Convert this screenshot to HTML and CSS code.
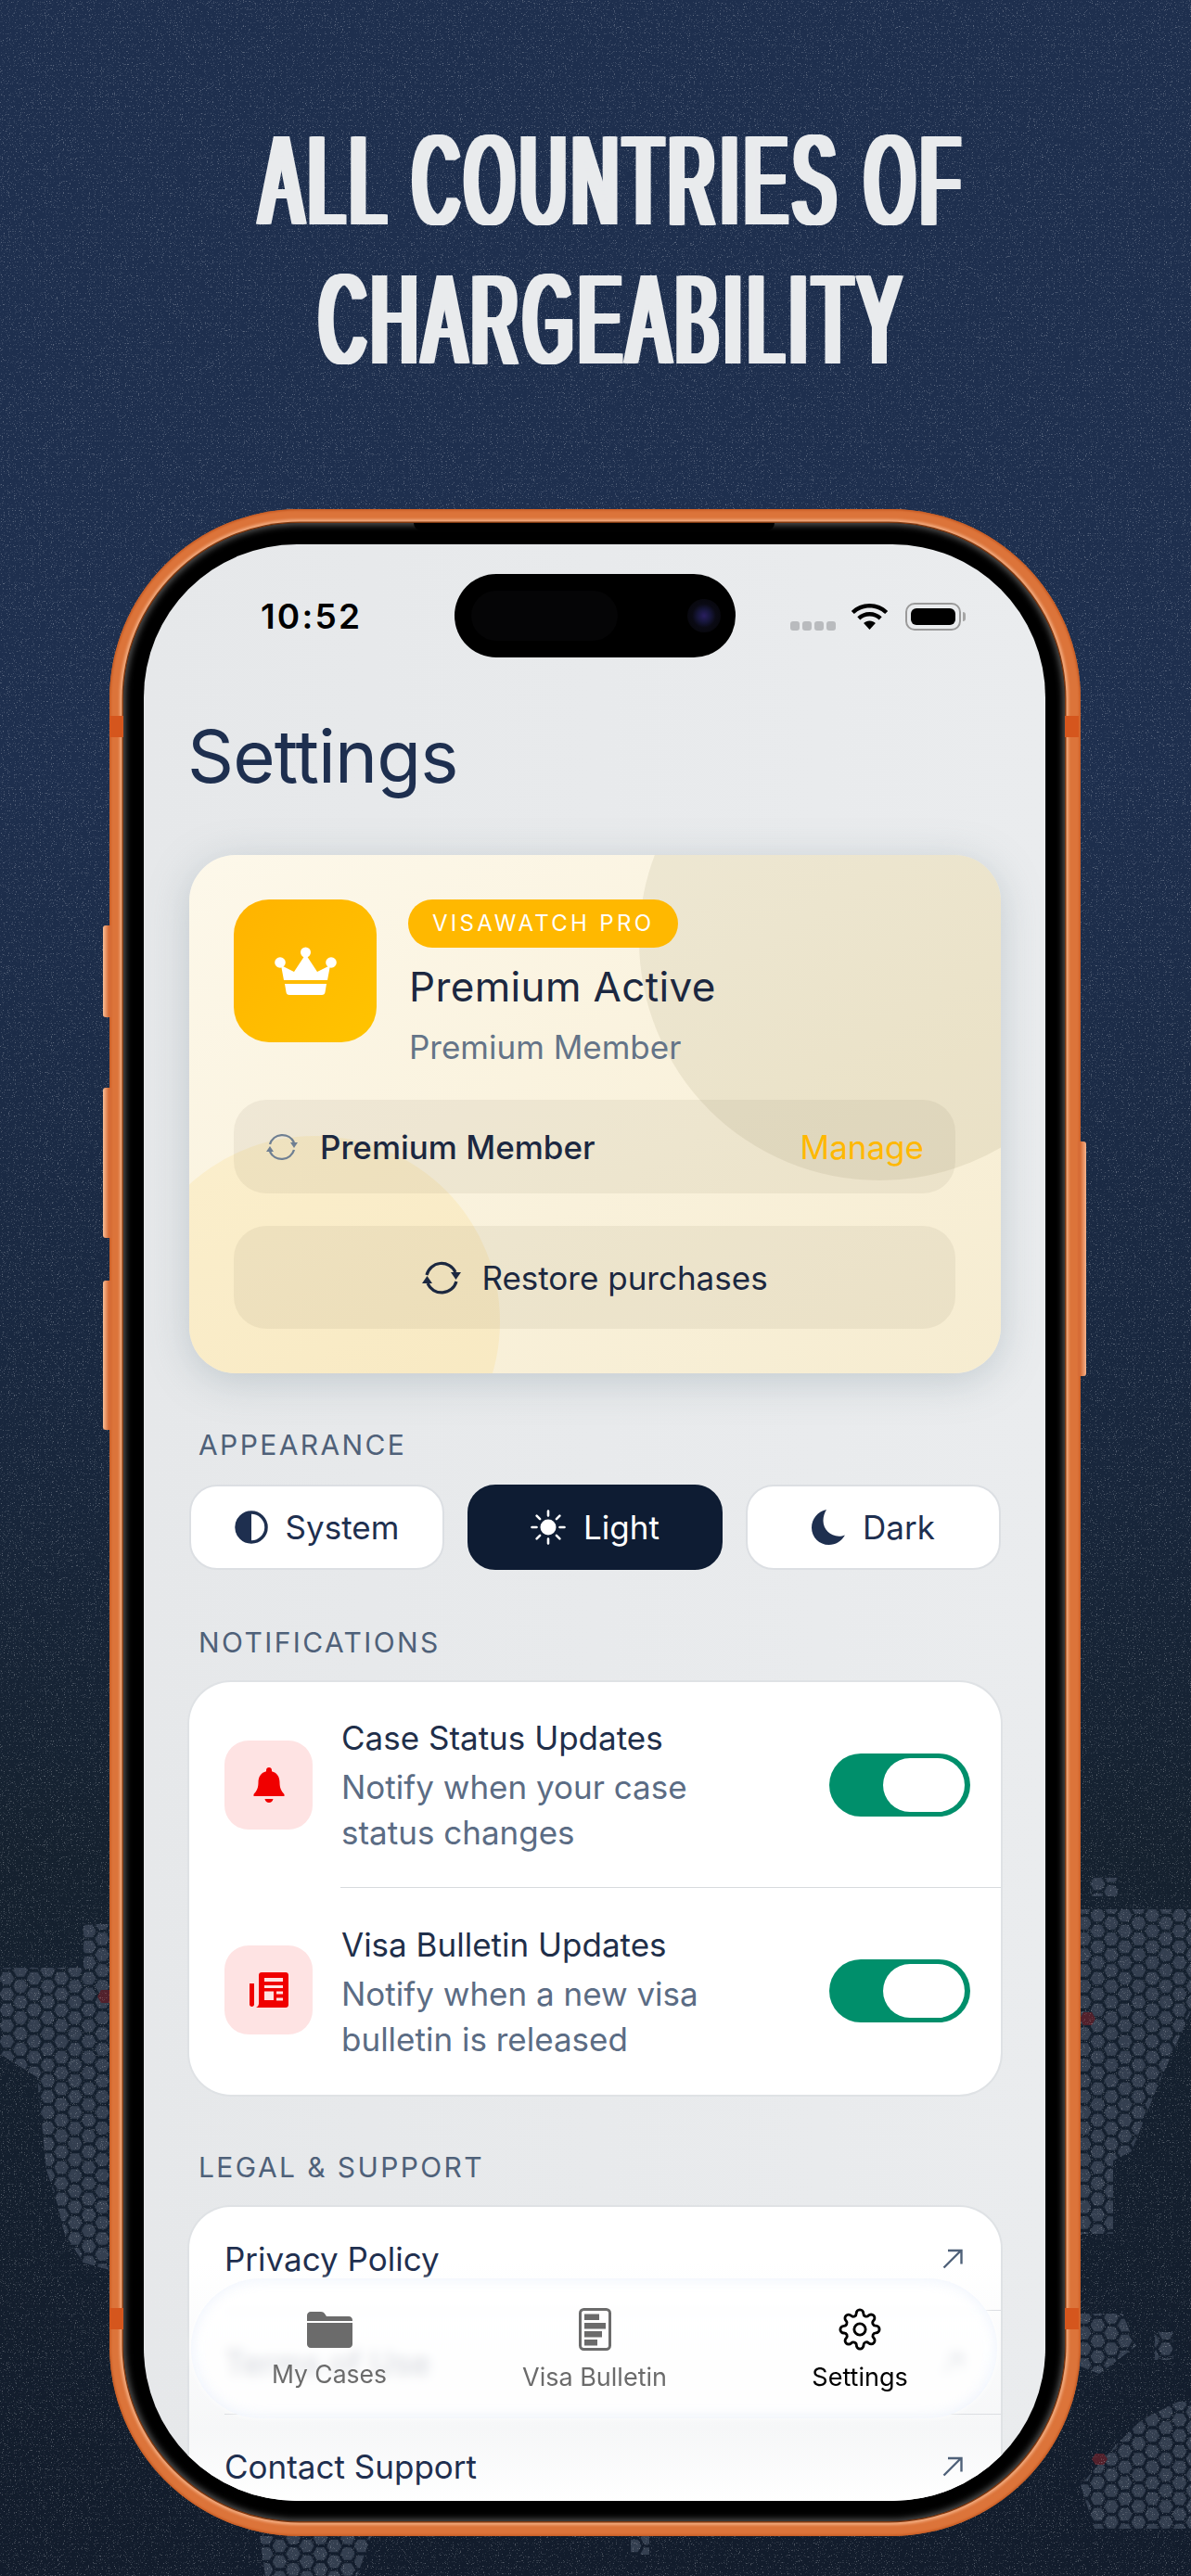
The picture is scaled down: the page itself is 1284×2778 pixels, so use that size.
FILE: index.html
```html
<!DOCTYPE html>
<html lang="en">
<head>
<meta charset="utf-8">
<title>VisaWatch</title>
<link rel="stylesheet" href="styles.css">
</head>
<body>
<div class="stage">
  <svg class="backdrop" viewBox="0 0 1284 2778" aria-hidden="true">
    <defs>
      <pattern id="hex" width="29.4" height="17" patternUnits="userSpaceOnUse">
        <polygon points="15.2,8.5 11.3,15.25 3.5,15.25 -.4,8.5 3.5,1.75 11.3,1.75"/>
        <polygon points="29.9,0 26,6.75 18.2,6.75 14.3,0 18.2,-6.75 26,-6.75"/>
        <polygon points="29.9,17 26,23.75 18.2,23.75 14.3,17 18.2,10.25 26,10.25"/>
      </pattern>
      <filter id="grain" x="0" y="0" width="100%" height="100%">
        <feTurbulence type="fractalNoise" baseFrequency="0.85" numOctaves="2" seed="7"/>
        <feColorMatrix type="matrix" values="0 0 0 0 1  0 0 0 0 1  0 0 0 0 1  0 0 0 5 -3.05"/>
      </filter>
    </defs>
    <g class="map" fill="url(#hex)">
      <polygon points="0,2122 90,2122 90,2075 125,2075 125,2450 90,2440 70,2410 60,2370 50,2340 45,2290 40,2240 0,2215"/>
      <polygon points="1160,2059 1284,2059 1284,2169 1247,2252 1220,2320 1200,2330 1200,2409 1160,2409"/>
      <polygon points="1175,2025 1205,2025 1205,2045 1175,2045"/>
      <polygon points="1160,2495 1210,2495 1225,2530 1185,2560 1160,2550"/>
      <polygon points="1245,2515 1265,2515 1265,2545 1245,2545"/>
      <polygon points="1270,2590 1284,2590 1284,2727 1180,2727 1165,2680 1200,2640 1230,2610"/>
      <polygon points="280,2735 400,2735 385,2778 286,2778"/>
      <polygon points="680,2735 700,2735 700,2755 680,2755"/>
    </g>
    <g class="map-red">
      <polygon points="122,2153 118,2160 109,2160 105,2153 109,2146 118,2146"/>
      <polygon points="1181,2177 1177,2184 1168,2184 1164,2177 1168,2170 1177,2170"/>
      <polygon points="1194,2652 1190,2658 1181,2658 1177,2652 1181,2646 1190,2646"/>
    </g>
    <rect class="grain" width="1284" height="2778" filter="url(#grain)"/>
  </svg>

  <h1 class="headline">
    <span class="headline-line">ALL COUNTRIES OF</span>
    <span class="headline-line">CHARGEABILITY</span>
  </h1>

  <div class="phone">
    <i class="side side-l side-1"></i>
    <i class="side side-l side-2"></i>
    <i class="side side-l side-3"></i>
    <i class="side side-r"></i>
    <i class="band band-lt"></i>
    <i class="band band-lb"></i>
    <i class="band band-rt"></i>
    <i class="band band-rb"></i>
    <div class="bezel">
      <i class="notch"></i>
      <div class="screen">
        <div class="status">
          <span class="time">10:52</span>
          <div class="status-right">
            <span class="signal"><i></i><i></i><i></i><i></i></span>
            <svg class="wifi" viewBox="0 0 41 30"><path d="M20.5 5.5c6.6 0 12.3 2.5 16.7 6.6l3-3.2C35 4 28.200 1 20.500 1S6 4 .8 8.900l3 3.200C8.200 8 13.900 5.500 20.500 5.500z"/><path d="M20.500 14.500c4 0 7.500 1.500 10.200 3.900l3-3.200c-3.500-3.200-8.100-5.200-13.200-5.200s-9.700 2-13.200 5.200l3 3.200c2.700-2.400 6.200-3.900 10.200-3.900z"/><path d="M20.500 19.500c-2.500 0-4.700.9-6.400 2.500l6.400 7 6.400-7c-1.700-1.600-3.900-2.500-6.400-2.500z"/></svg>
            <span class="battery"><i></i></span>
            <i class="battery-tip"></i>
          </div>
        </div>
        <div class="island"><i class="island-sensor"></i><i class="island-cam"></i></div>

        <h2 class="page-title">Settings</h2>

        <section class="premium">
          <i class="blob blob-a"></i>
          <i class="blob blob-b"></i>
          <div class="premium-head">
            <div class="crown-box">
              <svg class="crown" viewBox="0 0 67 52" fill="#fff"><circle cx="33.500" cy="6" r="5.500"/><circle cx="6" cy="17" r="5.800"/><circle cx="61" cy="17" r="5.800"/><path d="M7 20l14 7L33.500 8 46 27l14-7-3 16H10z"/><path d="M11 40h45l-1.500 9c-.3 2-1.500 3-3.500 3H16c-2 0-3.200-1-3.500-3z"/></svg>
            </div>
            <div class="premium-info">
              <span class="badge">VISAWATCH PRO</span>
              <div class="premium-title">Premium Active</div>
              <div class="premium-sub">Premium Member</div>
            </div>
          </div>
          <div class="member-row">
            <svg class="sync sync-sm" viewBox="0 0 36 36" fill="none" stroke="#6f7f92" stroke-width="2.400"><path d="M5 15A14 14 0 0 1 31 13"/><path d="M31 21A14 14 0 0 1 5 23"/><path d="M27 13h8l-4 6z" fill="#6f7f92" stroke="none"/><path d="M1 23h8l-4-6z" fill="#6f7f92" stroke="none"/></svg>
            <span class="member-label">Premium Member</span>
            <span class="manage">Manage</span>
          </div>
          <div class="restore">
            <svg class="sync sync-lg" viewBox="0 0 44 38" fill="none" stroke="#1c2840" stroke-width="3.200"><path d="M6 16A16.500 16.500 0 0 1 37 13"/><path d="M38 23A16.500 16.500 0 0 1 7 25"/><path d="M32 13h11l-5.500 8z" fill="#1c2840" stroke="none"/><path d="M1 25h11L6.500 17z" fill="#1c2840" stroke="none"/></svg>
            <span>Restore purchases</span>
          </div>
        </section>

        <div class="section-label label-appearance">APPEARANCE</div>
        <div class="segments">
          <div class="segment">
            <svg class="seg-icon" viewBox="0 0 36 36"><circle cx="18" cy="18" r="16" fill="none" stroke="#1e2f4f" stroke-width="3.500"/><path d="M18 2a16 16 0 0 0 0 32z" fill="#1e2f4f"/></svg>
            <span>System</span>
          </div>
          <div class="segment segment-active">
            <svg class="seg-icon seg-sun" viewBox="0 0 38 38" stroke="#fff" stroke-width="2.600" stroke-linecap="round"><circle cx="19" cy="19" r="8.500" fill="#fff" stroke="none"/><path d="M19 1.500v5M19 31.500v5M1.500 19h5M31.500 19h5M6.600 6.600l3.500 3.500M27.900 27.900l3.500 3.500M6.600 31.400l3.500-3.500M27.900 10.100l3.500-3.500"/></svg>
            <span>Light</span>
          </div>
          <div class="segment">
            <svg class="seg-icon seg-moon" viewBox="0 0 36 38"><path d="M16 0C6.500 2 0 10 0 19.500 0 30 8.500 38 18.500 38c7.500 0 13.500-4 17.500-10.500-2 1-4.500 1.200-6.500 1.200C20 28.700 12.500 21 12.500 12 12.500 7.500 13.800 3.500 16 0z" fill="#1e2f4f"/></svg>
            <span>Dark</span>
          </div>
        </div>

        <div class="section-label label-notifications">NOTIFICATIONS</div>
        <section class="card notif-card">
          <div class="notif-row notif-row-first">
            <div class="notif-icon">
              <svg class="bell" viewBox="0 0 34 38" fill="#f00000"><path d="M17 0c1.700 0 3 1.300 3 3v1.200c5.500 1.300 8.500 6 8.500 11.800 0 6 1.500 9 5 13v2H.500v-2c3.500-4 5-7 5-13 0-5.800 3-10.500 8.500-11.800V3c0-1.700 1.300-3 3-3z"/><path d="M12.500 34h9c-.5 2.500-2.300 4-4.500 4s-4-1.500-4.500-4z"/></svg>
            </div>
            <div class="notif-body">
              <div class="notif-text">
                <div class="notif-title">Case Status Updates</div>
                <div class="notif-sub">Notify when your case<br>status changes</div>
              </div>
              <div class="toggle"><i class="knob"></i></div>
            </div>
          </div>
          <div class="notif-row">
            <div class="notif-icon">
              <svg class="news" viewBox="0 0 42 38" fill="#f00000"><path d="M10 3c0-1.700 1.300-3 3-3h26c1.700 0 3 1.300 3 3v32c0 1.700-1.300 3-3 3H7c1.900-.8 3-2.400 3-4.500zM16 6v4h20V6zm0 8v3h20v-3zm0 6.500V30h10v-9.500zm13 0v3h7v-3zm0 7v3h7v-3z"/><path d="M0 12h5v22.500c0 1.500-1.100 2.500-2.500 2.500S0 36 0 34.500z"/></svg>
            </div>
            <div class="notif-body notif-body-last">
              <div class="notif-text">
                <div class="notif-title">Visa Bulletin Updates</div>
                <div class="notif-sub">Notify when a new visa<br>bulletin is released</div>
              </div>
              <div class="toggle"><i class="knob"></i></div>
            </div>
          </div>
        </section>

        <div class="section-label label-legal">LEGAL &amp; SUPPORT</div>
        <section class="card legal-card">
          <div class="legal-row"><span>Privacy Policy</span>
            <svg class="arrow" viewBox="0 0 22 22" fill="none" stroke="#4f6179" stroke-width="2.400"><path d="M1.500 20.500L20 2M6 2h14.500v14.500"/></svg></div>
          <div class="legal-row"><span>Terms of Use</span>
            <svg class="arrow" viewBox="0 0 22 22" fill="none" stroke="#4f6179" stroke-width="2.400"><path d="M1.500 20.500L20 2M6 2h14.500v14.500"/></svg></div>
          <div class="legal-row"><span>Contact Support</span>
            <svg class="arrow" viewBox="0 0 22 22" fill="none" stroke="#4f6179" stroke-width="2.400"><path d="M1.500 20.500L20 2M6 2h14.500v14.500"/></svg></div>
        </section>

        <nav class="tabbar">
          <div class="tab tab-cases">
            <div class="tab-icon">
              <svg class="folder" viewBox="0 0 49 39"><path d="M4 0h11c2 0 3 .8 4 2l2 3h24c2.300 0 4 1.700 4 4v1H0V4c0-2.300 1.700-4 4-4z" fill="#6b6b6b"/><path d="M0 12h49v23c0 2.300-1.700 4-4 4H4c-2.300 0-4-1.700-4-4z" fill="#6b6b6b"/></svg>
            </div>
            <span>My Cases</span>
          </div>
          <div class="tab tab-bulletin">
            <div class="tab-icon">
              <svg class="bulletin" viewBox="0 0 35 46"><rect x="1.500" y="1.500" width="32" height="43" rx="4" fill="none" stroke="#6b6b6b" stroke-width="3"/><rect x="6" y="6.500" width="16" height="6.500" fill="#6b6b6b"/><rect x="6" y="16" width="23" height="6.500" fill="#6b6b6b"/><rect x="6" y="25" width="19" height="6.500" fill="#6b6b6b"/><rect x="6" y="34" width="14" height="6.500" fill="#6b6b6b"/></svg>
            </div>
            <span>Visa Bulletin</span>
          </div>
          <div class="tab tab-settings">
            <div class="tab-icon">
              <svg class="gear" viewBox="0 0 24 24" fill="none" stroke="#000" stroke-width="1.500" stroke-linejoin="round"><circle cx="12" cy="12" r="3.200"/><path d="M19.400 15a1.650 1.650 0 0 0 .33 1.820l.06.06a2 2 0 0 1 0 2.830 2 2 0 0 1-2.830 0l-.06-.06a1.650 1.650 0 0 0-1.820-.33 1.650 1.650 0 0 0-1 1.510V21a2 2 0 0 1-2 2 2 2 0 0 1-2-2v-.09A1.650 1.650 0 0 0 9 19.400a1.650 1.650 0 0 0-1.820.33l-.06.06a2 2 0 0 1-2.830 0 2 2 0 0 1 0-2.830l.06-.06a1.650 1.650 0 0 0 .33-1.820 1.650 1.650 0 0 0-1.510-1H3a2 2 0 0 1-2-2 2 2 0 0 1 2-2h.09A1.650 1.650 0 0 0 4.600 9a1.650 1.650 0 0 0-.33-1.820l-.06-.06a2 2 0 0 1 0-2.830 2 2 0 0 1 2.830 0l.06.06a1.650 1.650 0 0 0 1.820.33H9a1.650 1.650 0 0 0 1-1.510V3a2 2 0 0 1 2-2 2 2 0 0 1 2 2v.09a1.650 1.650 0 0 0 1 1.510 1.650 1.650 0 0 0 1.820-.33l.06-.06a2 2 0 0 1 2.830 0 2 2 0 0 1 0 2.830l-.06.06a1.650 1.650 0 0 0-.33 1.820V9a1.650 1.650 0 0 0 1.510 1H21a2 2 0 0 1 2 2 2 2 0 0 1-2 2h-.09a1.650 1.650 0 0 0-1.510 1z"/></svg>
            </div>
            <span>Settings</span>
          </div>
        </nav>
      </div>
    </div>
  </div>
</div>
</body>
</html>
```

FILE: styles.css
```css
* { box-sizing: border-box; }
html, body { margin: 0; padding: 0; }
body { width: 1284px; height: 2778px; overflow: hidden; font-family: Inter, "Liberation Sans", sans-serif; }
i { display: block; }

.stage {
  position: relative;
  width: 1284px;
  height: 2778px;
  overflow: hidden;
  background: linear-gradient(180deg, #1e2f4e 0%, #1e2f4e 30%, #192840 52%, #15212f 72%, #121c2c 100%);
}
.backdrop { position: absolute; left: 0; top: 0; width: 1284px; height: 2778px; }
.map polygon { stroke: none; }
#hex polygon { fill: #343f50; }
.map-red { fill: #51202b; }
.grain { opacity: .28; }

.headline {
  position: relative;
  display: flex;
  flex-direction: column;
  align-items: center;
  margin: 0;
  padding: 120px 0 0 38px;
  height: 549px;
  font-family: "Liberation Sans", sans-serif;
  font-weight: 400;
  font-size: 137px;
  line-height: 149.5px;
  letter-spacing: 14px;
  color: #e9ebed;
  text-shadow: 2px 0 #e9ebed, -2px 0 #e9ebed, 4px 0 #e9ebed, -4px 0 #e9ebed, 6px 0 #e9ebed, -6px 0 #e9ebed, 8px 0 #e9ebed, -8px 0 #e9ebed, 10px 0 #e9ebed, -10px 0 #e9ebed;
}
.headline-line { display: block; flex: none; width: max-content; white-space: nowrap; transform: scaleX(.495); }

/* device */
.phone {
  position: relative;
  width: 1047px;
  height: 2186px;
  margin-left: 118px;
  padding: 15px 17px 16px 15px;
  border-radius: 205px;
  background: #dc743a;
  box-shadow: inset 0 0 2px 1.500px #c75c24;
}
.side { position: absolute; width: 9px; background: linear-gradient(90deg, #fbbe96, #d66c36 70%); border-radius: 3px 0 0 3px; }
.side-l { left: -7px; }
.side-1 { top: 449px; height: 99px; }
.side-2 { top: 624px; height: 162px; }
.side-3 { top: 832px; height: 161px; }
.side-r { right: -6px; top: 682px; height: 253px; border-radius: 0 3px 3px 0; background: linear-gradient(270deg, #f7b28a, #d66c36 70%); }
.band { position: absolute; width: 15px; height: 23px; background: #d5561d; z-index: 2; }
.band-lt { left: 0; top: 223px; }
.band-lb { left: 0; top: 1940px; }
.band-rt { right: 2px; top: 223px; }
.band-rb { right: 2px; top: 1940px; }

.bezel {
  position: relative;
  width: 1015px;
  height: 2155px;
  padding: 23px 21px 22px 22px;
  border-radius: 190px;
  background: #000;
  box-shadow: 0 0 0 1.500px #80380f, 0 0 3px 4px rgba(255, 205, 170, .6), inset 0 0 7px 2px #5a5a5a;
}
.notch { position: absolute; left: 313px; top: 0; width: 389px; height: 8px; background: #000; border-radius: 0 0 12px 12px; }

.screen {
  position: relative;
  width: 972px;
  height: 2110px;
  padding: 0 48px 0 49px;
  border-radius: 165px;
  overflow: hidden;
  background: linear-gradient(90deg, #e6e8ea, #eaecee);
  color: #1c2840;
}

/* status bar */
.status { display: flex; justify-content: space-between; height: 120px; margin: 0 -48px 0 -49px; padding: 0 86px 0 126px; }
.time { padding-top: 55px; font-size: 37px; line-height: 45px; font-weight: 600; color: #000; letter-spacing: 2.200px; }
.status-right { display: flex; align-items: flex-start; padding-top: 63px; }
.signal { display: flex; gap: 3px; margin-top: 20px; margin-right: 16px; }
.signal i { width: 10px; height: 10px; border-radius: 3px; background: #b9bbbe; }
.wifi { width: 41px; height: 30px; margin-right: 18px; fill: #000; }
.battery { display: block; width: 60px; height: 30px; padding: 4px; border: 2px solid #9a9a9a; border-radius: 10px; }
.battery i { height: 100%; background: #000; border-radius: 6px; }
.battery-tip { width: 3px; height: 10px; margin: 10px 0 0 2px; background: #a5a5a5; border-radius: 0 3px 3px 0; }

.island { position: absolute; left: 335px; top: 32px; width: 303px; height: 90px; border-radius: 45px; background: #000; display: flex; align-items: center; justify-content: space-between; padding: 0 16px 0 18px; }
.island-sensor { width: 158px; height: 54px; border-radius: 27px; background: #050506; }
.island-cam { width: 36px; height: 36px; border-radius: 50%; background: radial-gradient(circle, #2a1f60 0, #16163a 28%, #0a0a14 50%, #050507 100%); }

.page-title { margin: 61px 0 58px -2px; font-size: 78px; line-height: 96px; font-weight: 400; color: #1e2f4f; letter-spacing: -.9px; }

/* premium card */
.premium {
  position: relative;
  overflow: hidden;
  height: 559px;
  padding: 48px 49px 0 48px;
  border-radius: 50px;
  background: linear-gradient(150deg, #fdf8ea, #f6ecd0);
  box-shadow: 0 8px 44px rgba(120, 140, 150, .34);
}
.blob { position: absolute; border-radius: 50%; }
.blob-a { left: 485px; top: -167px; width: 518px; height: 518px; background: rgba(120, 105, 60, .1); }
.blob-b { left: -65px; top: 303px; width: 400px; height: 400px; background: rgba(255, 195, 50, .12); }
.premium-head { position: relative; display: flex; gap: 34px; height: 216px; }
.crown-box { display: flex; align-items: center; justify-content: center; width: 154px; height: 154px; border-radius: 38px; background: linear-gradient(135deg, #ffb300, #ffc400); }
.crown { width: 67px; height: 52px; }
.premium-info { padding-left: 1px; }
.badge { display: inline-block; margin-left: -1px; height: 52px; padding: 0 26px; border-radius: 26px; background: #ffb800; color: #fff; font-size: 24px; line-height: 52px; letter-spacing: 3.300px; }
.premium-title { margin-top: 16px; font-size: 44px; line-height: 53px; font-weight: 400; letter-spacing: .35px; color: #1c2840; }
.premium-sub { margin-top: 18px; font-size: 35px; line-height: 41px; color: #647488; }

.member-row { position: relative; display: flex; align-items: center; height: 101px; padding: 0 34px; border-radius: 35px; background: rgba(100, 85, 50, .075); font-size: 35px; }
.sync-sm { width: 36px; height: 36px; margin-right: 23px; }
.member-label { flex: 1; font-weight: 500; color: #1c2840; }
.manage { color: #ffb800; }
.restore { position: relative; display: flex; align-items: center; justify-content: center; gap: 21px; height: 111px; margin-top: 35px; border-radius: 35px; background: rgba(100, 85, 50, .075); font-size: 35px; color: #1c2840; }
.sync-lg { width: 44px; height: 38px; }

/* sections */
.section-label { padding-left: 10px; font-size: 30px; line-height: 36px; letter-spacing: 2.400px; color: #4f6179; }
.label-appearance { margin: 59px 0 25px; }
.label-notifications { margin: 60px 0 25px; }
.label-legal { margin: 60px 0 25px; }

.segments { display: flex; gap: 25px; }
.segment { flex: 1; display: flex; align-items: center; justify-content: center; gap: 19px; height: 92px; border: 2px solid #dcdfe3; border-radius: 30px; background: #fff; font-size: 35px; color: #1e2f4f; }
.segment-active { background: #0e1c33; border-color: #0e1c33; color: #fff; }
.seg-icon { width: 36px; height: 36px; }
.seg-sun { width: 38px; height: 38px; }
.seg-moon { height: 38px; }

.card { background: #fff; border-radius: 45px; box-shadow: 0 0 0 2px #dfe2e5; }
.notif-card { height: 445px; }
.notif-row { display: flex; height: 222px; align-items: stretch; }
.notif-icon { display: flex; align-items: center; justify-content: center; flex: none; width: 95px; height: 96px; margin: 63px 0 0 38px; border-radius: 26px; background: #fee3e3; }
.notif-row + .notif-row .notif-icon { margin-top: 62px; }
.bell { width: 34px; height: 38px; }
.news { width: 42px; height: 38px; }
.notif-body { flex: 1; display: flex; align-items: center; justify-content: space-between; margin-left: 30px; padding: 0 33px 0 1px; border-bottom: 1px solid #d7dade; }
.notif-body-last { border-bottom: 0; }
.notif-text { padding-top: 6px; }
.notif-title { font-size: 35px; line-height: 41px; color: #1f2f4a; }
.notif-sub { margin-top: 8px; font-size: 35px; line-height: 49px; color: #5b6c84; }
.toggle { display: flex; justify-content: flex-end; align-items: center; width: 152px; height: 68px; padding-right: 6px; border-radius: 34px; background: #008f6b; }
.knob { width: 88px; height: 58px; border-radius: 29px; background: #fff; }

.legal-card { height: 400px; background: linear-gradient(180deg, #fff 0, #fff 60px, #f6f7f8 240px, #fff 320px); }
.legal-row { display: flex; align-items: center; justify-content: space-between; height: 112px; margin-left: 38px; padding-right: 41px; border-bottom: 1px solid #dcdee2; font-size: 35px; color: #1f2f4f; }
.legal-row:last-child { border-bottom: 0; }
.arrow { width: 22px; height: 22px; }

/* tab bar */
.tabbar {
  position: absolute;
  left: 51px;
  bottom: 89px;
  display: grid;
  grid-template-columns: repeat(3, 286px);
  width: 869px;
  height: 151px;
  padding: 32px 6px 0;
  border-radius: 75px;
  background: rgba(255, 255, 255, .8);
  -webkit-backdrop-filter: blur(6px);
  backdrop-filter: blur(6px);
  box-shadow: inset 0 0 16px rgba(222, 232, 250, .6), 0 0 6px rgba(255, 255, 255, .9);
}
.tab { display: flex; flex-direction: column; align-items: center; font-size: 27px; line-height: 32px; color: #6b6b6b; }
.tab-icon { display: flex; align-items: center; justify-content: center; height: 46px; margin-bottom: 13px; }
.tab-cases { font-size: 26.500px; }
.tab-cases .tab-icon { margin-bottom: 9px; }
.tab-settings { color: #000; }
.folder { width: 49px; height: 39px; }
.bulletin { width: 35px; height: 46px; }
.gear { width: 46px; height: 46px; }
```
